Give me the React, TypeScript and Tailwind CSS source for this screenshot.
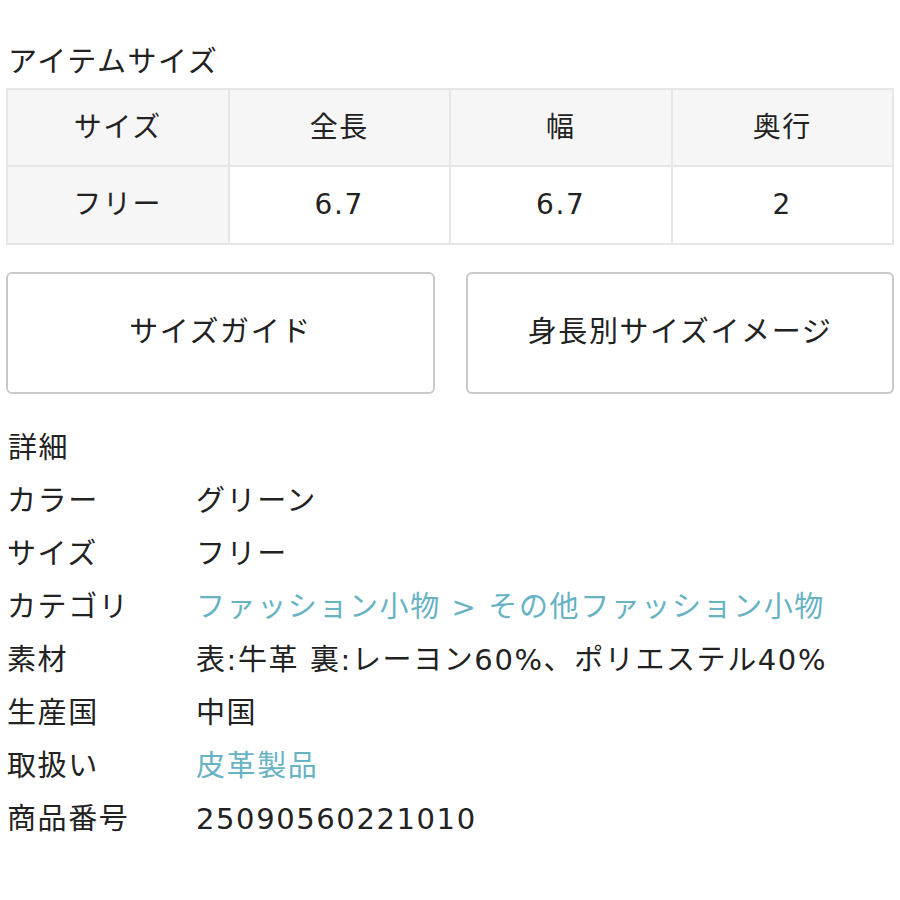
const FONT = "font-['DejaVu_Sans','Noto_Sans_CJK_JP',sans-serif]"

const HEAD = ['サイズ', '全長', '幅', '奥行']
const ROW = ['フリー', '6.7', '6.7', '2']

type Detail = { label: string; value: string; link?: boolean }

const DETAILS: Detail[] = [
  { label: 'カラー', value: 'グリーン' },
  { label: 'サイズ', value: 'フリー' },
  { label: 'カテゴリ', value: 'ファッション小物 > その他ファッション小物', link: true },
  { label: '素材', value: '表:牛革 裏:レーヨン60%、ポリエステル40%' },
  { label: '生産国', value: '中国' },
  { label: '取扱い', value: '皮革製品', link: true },
  { label: '商品番号', value: '25090560221010' },
]

export default function App() {
  return (
    <div className={`${FONT} w-[900px] h-[900px] bg-white text-[#222] px-[6px] pt-[44px] tracking-[1.6px]`}>
      <h2 className="text-[29px] leading-[36px] pl-[2px] font-normal">アイテムサイズ</h2>

      <table className="mt-[8px] w-[888px] border-collapse table-fixed">
        <tbody>
          <tr>
            {HEAD.map(h => (
              <td key={h} className="h-[77px] border-2 border-[#e6e6e6] bg-[#f6f6f6] text-center text-[28px]">{h}</td>
            ))}
          </tr>
          <tr>
            {ROW.map((v, i) => (
              <td
                key={i}
                className={`h-[78px] border-2 border-[#e6e6e6] text-center text-[28px] ${i === 0 ? 'bg-[#f6f6f6]' : 'bg-white'}`}
              >
                {v}
              </td>
            ))}
          </tr>
        </tbody>
      </table>

      <div className="mt-[27px] flex gap-[31px]">
        <button className="w-[429px] h-[122px] border-2 border-[#c9c9c9] rounded-[6px] bg-white text-[29px]">サイズガイド</button>
        <button className="w-[428px] h-[122px] border-2 border-[#c9c9c9] rounded-[6px] bg-white text-[29px]">身長別サイズイメージ</button>
      </div>

      <div className="mt-[28px] text-[29px] leading-[53px]">
        <div className="pl-[2px]">詳細</div>
        {DETAILS.map(d => (
          <div key={d.label} className="flex">
            <div className="w-[190px] shrink-0 pl-[1px]">{d.label}</div>
            <div className={d.link ? 'text-[#67b2c3]' : ''}>{d.value}</div>
          </div>
        ))}
      </div>
    </div>
  )
}
